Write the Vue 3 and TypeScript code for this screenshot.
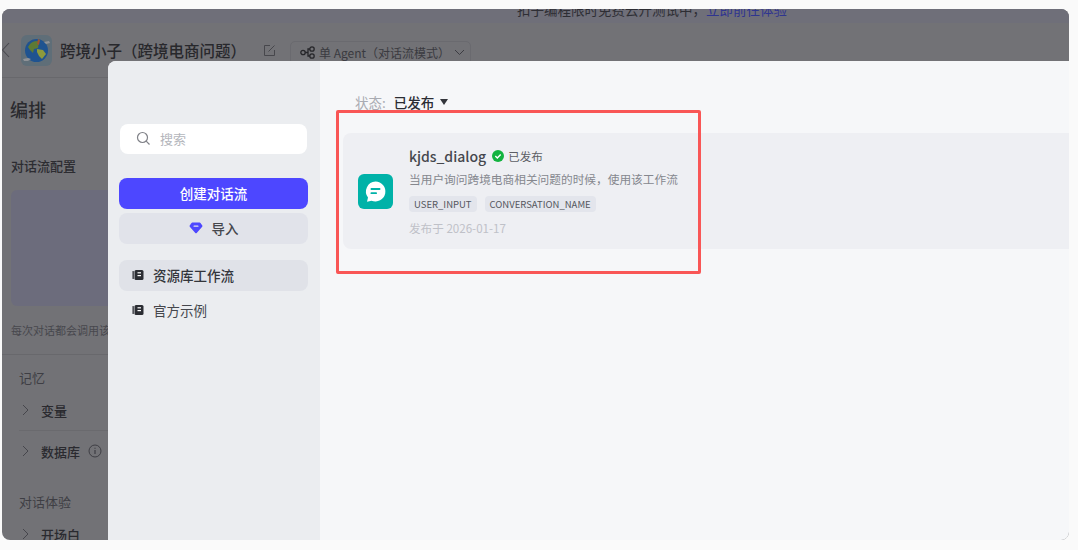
<template>
  <div class="page">
    <div class="window">
      <div class="banner">
        <span>扣子编程限时免费云开测试中，<a class="banner-link">立即前往体验</a></span>
      </div>
      <header class="topbar">
        <svg class="back" width="9" height="16" viewBox="0 0 9 16"><path d="M8 1 1.5 8 8 15" fill="none" stroke="#4a4a50" stroke-width="1.1" /></svg>
        <svg class="avatar" width="31" height="31" viewBox="0 0 31 31">
          <rect width="31" height="31" rx="6" fill="#5f6e78" />
          <circle cx="15.5" cy="15.5" r="11.5" fill="#1f5390" />
          <path d="M9 9c3-3 7-4 9-2l-1 6-4 1-1 4-3-3-2-3z" fill="#5d7a35" />
          <path d="M16 14l6 1 3 4-4 5-3-3-2-4z" fill="#8d9a3c" />
          <path d="M17 4l2 1-1 5-2-1z" fill="#a0552f" />
          <path d="M2 24l5-1 3 1-3 2H3zM23 7l5-1 1 2-4 1z" fill="#8f9297" />
        </svg>
        <span class="app-title">跨境小子（跨境电商问题）</span>
        <svg class="edit" width="13" height="13" viewBox="0 0 13 13"><path d="M7 1.5H1.5v10h10V6M5.5 7.5 11.5 1.5" fill="none" stroke="#47474c" stroke-width="1" /></svg>
        <div class="mode-pill">
          <svg class="mode-icon" width="15" height="13" viewBox="0 0 15 13"><g fill="none" stroke="#26262a" stroke-width="1.3"><circle cx="3" cy="6.500" r="2.200" /><circle cx="12" cy="3" r="2.200" /><circle cx="12" cy="10" r="2.200" /><path d="M5.200 6.500h2.800V3h1.800M8 6.500V10h1.800" /></g></svg>
          <span>单 Agent（对话流模式）</span>
          <svg class="mode-icon" width="11" height="7" viewBox="0 0 11 7"><path d="M1 1l4.500 4.500L10 1" fill="none" stroke="#3c3c42" stroke-width="1" /></svg>
        </div>
      </header>
      <aside class="backdrop-panel">
        <div class="panel-title">编排</div>
        <div class="flow-label">对话流配置</div>
        <div class="flow-card"></div>
        <div class="flow-hint">每次对话都会调用该对话流</div>
        <section v-for="group in groups" :key="group.name" class="group">
          <div class="group-name">{{ group.name }}</div>
          <div v-for="row in group.rows" :key="row.label" class="group-row">
            <svg width="7" height="12" viewBox="0 0 7 12"><path d="M1 1l5 5-5 5" fill="none" stroke="#46464c" stroke-width="1" /></svg>
            <span>{{ row.label }}</span>
            <svg v-if="row.info" class="info" width="14" height="14" viewBox="0 0 14 14"><circle cx="7" cy="7" r="6" fill="none" stroke="#3e3e44" stroke-width="1" /><path d="M7 6v4M7 3.800v1" stroke="#3e3e44" stroke-width="1.200" /></svg>
          </div>
        </section>
      </aside>

      <div class="modal">
        <nav class="sidebar">
          <div class="search">
            <svg width="15" height="15" viewBox="0 0 15 15"><circle cx="6.500" cy="6.500" r="5" fill="none" stroke="#808288" stroke-width="1.200" /><path d="m10.200 10.200 3.300 3.300" stroke="#808288" stroke-width="1.200" /></svg>
            <span>搜索</span>
          </div>
          <button class="btn-create">创建对话流</button>
          <button class="btn-import">
            <svg width="14" height="12" viewBox="0 0 14 12"><path d="M3.300.5h7.400a1 1 0 0 1 .8.400l1.800 2.600a1 1 0 0 1-.1 1.200L7.700 11a1 1 0 0 1-1.400 0L.8 4.700a1 1 0 0 1-.1-1.200L2.500.9a1 1 0 0 1 .8-.4z" fill="#4d47ff" /><rect x="4.500" y="3.500" width="5" height="1.300" rx=".6" fill="#e1e3ea" /></svg>
            <span>导入</span>
          </button>
          <ul class="menu">
            <li v-for="item in menu" :key="item.label" class="menu-item" :class="{ active: item.active }">
              <svg width="12" height="12" viewBox="0 0 12 12"><rect x="2.500" y="1" width="9" height="10" rx="1.500" fill="#2b2d33" /><rect x=".5" y="2" width="1.300" height="8" rx=".6" fill="#2b2d33" /><rect x="5.500" y="3.200" width="3.500" height="1.200" fill="#fff" /><rect x="5.500" y="6" width="3.500" height="1.200" fill="#fff" /></svg>
              <span>{{ item.label }}</span>
            </li>
          </ul>
        </nav>
        <main class="content">
          <div class="filter">
            <span class="filter-label">状态:</span>
            <span class="filter-value">已发布</span>
            <i class="caret"></i>
          </div>
          <article class="workflow-card">
            <svg class="wf-icon" width="35" height="35" viewBox="0 0 35 35">
              <rect width="35" height="35" rx="6" fill="#00b2a8" />
              <path d="M17.500 7.500a10 10 0 1 1-4 19.200l-4.500 1.100 1-4.300a10 10 0 0 1 7.500-16z" fill="#fff" />
              <rect x="12.500" y="14" width="10" height="1.900" rx=".9" fill="#00b2a8" />
              <rect x="12.500" y="18.200" width="6.500" height="1.900" rx=".9" fill="#00b2a8" />
            </svg>
            <div class="wf-body">
              <div class="wf-head">
                <span class="wf-name">kjds_dialog</span>
                <svg width="12" height="12" viewBox="0 0 12 12"><circle cx="6" cy="6" r="6" fill="#12b33f" /><path d="M3.300 6.100 5.300 8l3.400-3.600" fill="none" stroke="#fff" stroke-width="1.400" /></svg>
                <span class="wf-status">已发布</span>
              </div>
              <div class="wf-desc">当用户询问跨境电商相关问题的时候，使用该工作流</div>
              <div class="wf-tags">
                <span v-for="tag in tags" :key="tag" class="wf-tag">{{ tag }}</span>
              </div>
              <div class="wf-date">发布于 2026-01-17</div>
            </div>
          </article>
        </main>
      </div>
      <div class="annotation"></div>
    </div>
  </div>
</template>

<script setup lang="ts">
interface GroupRow {
  label: string
  info?: boolean
}

const groups: { name: string; rows: GroupRow[] }[] = [
  { name: '记忆', rows: [{ label: '变量' }, { label: '数据库', info: true }] },
  { name: '对话体验', rows: [{ label: '开场白' }] },
]

const menu = [
  { label: '资源库工作流', active: true },
  { label: '官方示例', active: false },
]

const tags = ['USER_INPUT', 'CONVERSATION_NAME']
</script>

<style>
html,
body {
  margin: 0;
  background: #fafafa;
}
</style>

<style scoped>
.page {
  width: 1078px;
  height: 550px;
  box-sizing: border-box;
  padding: 9px 9px 10px 2px;
  font-family: "Noto Sans CJK SC", "Noto Sans", sans-serif;
  overflow: hidden;
}

.window {
  position: relative;
  height: 100%;
  background: #727276;
  border-radius: 8px;
  overflow: hidden;
  color: #2c2c31;
}

.banner {
  height: 14px;
  background: #6f6f79;
  position: relative;
  overflow: hidden;
  font-size: 13.5px;
  line-height: 14px;
  color: #2e2e34;
}

.banner span {
  position: absolute;
  left: 515px;
  top: -7px;
  white-space: nowrap;
}

.banner-link {
  color: #2f3590;
}

.topbar {
  height: 55px;
  box-sizing: border-box;
  border-bottom: 1px solid #68686c;
  display: flex;
  align-items: center;
}

.back {
  margin: 0 11px 0 -1px;
}

.avatar {
  flex: none;
  margin-right: 8px;
}

.app-title {
  font-size: 15.5px;
  font-weight: 500;
  color: #28282c;
  width: 203px;
  white-space: nowrap;
}

.edit {
  margin-right: 14px;
}

.mode-pill {
  width: 181px;
  height: 24px;
  box-sizing: border-box;
  display: flex;
  align-items: center;
  gap: 4px;
  padding: 0 8px 0 9px;
  margin-top: 5px;
  border: 1px solid #6a6a6f;
  border-radius: 5px;
  font-size: 12px;
  color: #3a3a40;
  white-space: nowrap;
}

.mode-icon {
  flex: none;
}

.backdrop-panel {
  padding: 17px 0 0 8px;
}

.panel-title {
  font-size: 18px;
  line-height: 28px;
  font-weight: 500;
  color: #2a2a2e;
}

.flow-label {
  margin-top: 33px;
  margin-left: 1px;
  font-size: 13px;
  line-height: 20px;
  font-weight: 500;
}

.flow-card {
  margin-top: 14px;
  margin-left: 1px;
  width: 110px;
  height: 116px;
  background: #6c6c7c;
  border-radius: 6px;
}

.flow-hint {
  margin-top: 16px;
  margin-left: 1px;
  white-space: nowrap;
  font-size: 11px;
  line-height: 16px;
  color: #47474d;
}

.group {
  margin-left: 9px;
}

.group:first-of-type {
  margin-top: 16px;
  margin-left: -8px;
  padding-top: 14px;
  padding-left: 17px;
  border-top: 1px solid #68686c;
}

.group + .group {
  padding-top: 22px;
}

.group-name {
  margin-bottom: 3px;
  font-size: 13px;
  line-height: 18px;
  color: #3e3e44;
}

.group-row {
  height: 40px;
  display: flex;
  align-items: center;
  gap: 12px;
  padding-left: 3px;
  border-bottom: 1px solid #6a6a6e;
  font-size: 13px;
  font-weight: 500;
  color: #2a2a2f;
}

.group-row:last-child {
  border-bottom: 0;
}

.info {
  margin-left: -4px;
}

.modal {
  position: absolute;
  left: 106px;
  top: 52px;
  right: 0;
  bottom: 0;
  display: flex;
  border-radius: 8px 0 0 0;
  overflow: hidden;
  background: #f6f7f9;
}

.sidebar {
  width: 212px;
  flex: none;
  box-sizing: border-box;
  padding: 63px 12px 0 11px;
  background: #ebedf0;
  display: flex;
  flex-direction: column;
}

.search {
  height: 30px;
  box-sizing: border-box;
  margin: 0 1px;
  display: flex;
  align-items: center;
  gap: 9px;
  padding: 0 0 1px 16px;
  background: #fff;
  border-radius: 8px;
  font-size: 13px;
  color: #b4b6bc;
}

.btn-create,
.btn-import {
  height: 31px;
  border: 0;
  border-radius: 8px;
  font-family: inherit;
  font-size: 13.5px;
  font-weight: 500;
  display: flex;
  align-items: center;
  justify-content: center;
  padding: 0 0 2px;
}

.btn-create {
  margin-top: 24px;
  background: #4d47ff;
  color: #fff;
}

.btn-import {
  margin-top: 4px;
  gap: 9px;
  background: #e1e3ea;
  color: #45474d;
}

.menu {
  list-style: none;
  margin: 16px 0 0;
  padding: 0;
  display: flex;
  flex-direction: column;
  gap: 4px;
}

.menu-item {
  height: 31px;
  box-sizing: border-box;
  display: flex;
  align-items: center;
  gap: 9px;
  padding: 0 0 2px 13px;
  border-radius: 8px;
  font-size: 13.5px;
  color: #45474d;
}

.menu-item.active {
  background: #e0e2e8;
  color: #33353b;
  font-weight: 500;
}

.content {
  flex: 1;
  min-width: 0;
  padding: 31px 0 0 23px;
}

.filter {
  height: 20px;
  display: flex;
  align-items: center;
  gap: 6px;
  margin-left: 12px;
  font-size: 13.5px;
  line-height: 20px;
}

.filter-label {
  color: #a9abb2;
  margin-right: 2px;
}

.filter-value {
  color: #2b2d33;
  font-weight: 500;
}

.caret {
  width: 0;
  height: 0;
  border-left: 4px solid transparent;
  border-right: 4px solid transparent;
  border-top: 6px solid #33353b;
}

.workflow-card {
  margin-top: 21px;
  height: 116px;
  display: flex;
  align-items: center;
  gap: 16px;
  padding-left: 15px;
  background: #eeeff3;
  border-radius: 8px 0 0 8px;
}

.wf-icon {
  flex: none;
}

.wf-body {
  display: flex;
  flex-direction: column;
}

.wf-head {
  display: flex;
  align-items: center;
  gap: 6px;
  height: 20px;
}

.wf-name {
  font-size: 14px;
  font-weight: 500;
  color: #45474d;
}

.wf-status {
  margin-left: -2px;
  font-size: 11.5px;
  color: #5c5e65;
}

.wf-desc {
  margin-top: 4px;
  font-size: 11.7px;
  line-height: 18px;
  color: #85878e;
  white-space: nowrap;
}

.wf-tags {
  margin-top: 8px;
  display: flex;
  gap: 8px;
}

.wf-tag {
  height: 16px;
  padding: 0 5px;
  background: #e3e5ec;
  border-radius: 4px;
  font-size: 9.5px;
  line-height: 16px;
  color: #55575e;
}

.wf-date {
  margin-top: 7px;
  font-size: 11.6px;
  line-height: 18px;
  color: #bfc1c8;
}

.annotation {
  position: absolute;
  left: 334px;
  top: 101px;
  width: 365px;
  height: 164px;
  box-sizing: border-box;
  border: 3px solid #f95656;
  border-radius: 2px;
  pointer-events: none;
}
</style>
